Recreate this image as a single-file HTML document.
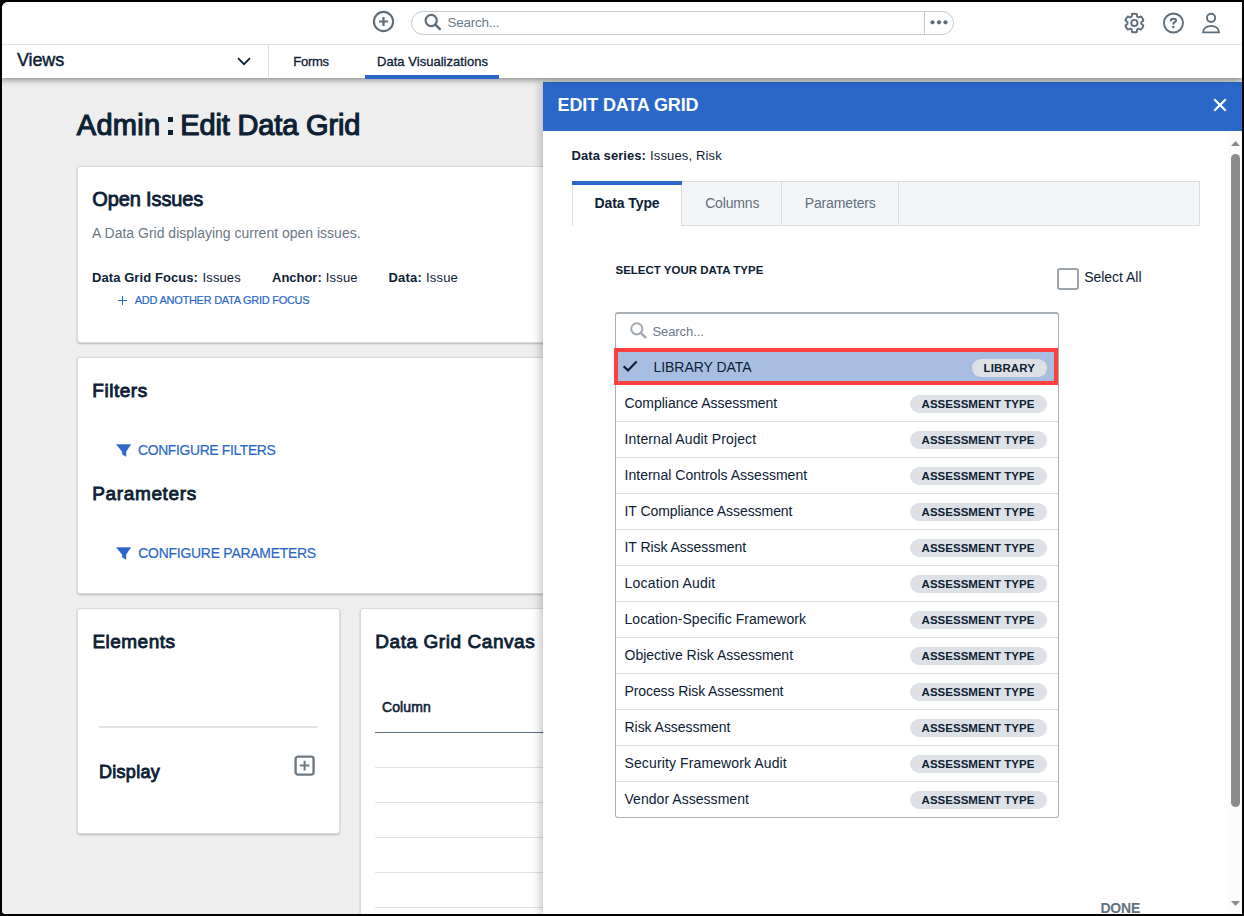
<!DOCTYPE html>
<html><head><meta charset="utf-8"><style>
html,body{margin:0;padding:0;}
body{width:1244px;height:916px;background:#000;overflow:hidden;position:relative;font-family:"Liberation Sans",sans-serif;}
#scr{position:absolute;left:2px;top:2px;width:1240px;height:912px;background:#eeeeee;border-radius:6px 0 0 3px;overflow:hidden;}
#in{position:absolute;left:-2px;top:-2px;width:1244px;height:916px;}
.t{position:absolute;line-height:1;white-space:nowrap;}
.r{position:absolute;}
</style></head><body><div id="scr"><div id="in">
<div class="r" style="left:0px;top:0px;width:1244px;height:44px;background:#fff;"></div>
<div class="r" style="left:0px;top:44px;width:1244px;height:1px;background:#dfe3e7;"></div>
<div class="r" style="left:0px;top:45px;width:1244px;height:33px;background:#fff;box-shadow:0 2px 6px rgba(0,0,0,.42);z-index:7;clip-path:inset(0 -20px -20px -20px);"></div>
<div class="r" style="left:268px;top:45px;width:1px;height:32px;background:#d9dde1;z-index:8;"></div>
<div class="r" style="left:365px;top:74.6px;width:134px;height:4px;background:#2a67c8;z-index:8;"></div>
<div class="r" style="left:77px;top:166px;width:1090px;height:177px;background:#fff;border:1px solid #d6dadf;border-radius:3px;box-shadow:0 1px 2px rgba(0,0,0,.22);box-sizing:border-box;"></div>
<div class="r" style="left:77px;top:357px;width:1090px;height:237px;background:#fff;border:1px solid #d6dadf;border-radius:3px;box-shadow:0 1px 2px rgba(0,0,0,.22);box-sizing:border-box;"></div>
<div class="r" style="left:77px;top:608px;width:263px;height:226px;background:#fff;border:1px solid #d6dadf;border-radius:3px;box-shadow:0 1px 2px rgba(0,0,0,.22);box-sizing:border-box;"></div>
<div class="r" style="left:360px;top:608px;width:807px;height:400px;background:#fff;border:1px solid #d6dadf;border-radius:3px;box-shadow:0 1px 2px rgba(0,0,0,.22);box-sizing:border-box;"></div>
<div class="r" style="left:99px;top:726px;width:219px;height:2px;background:#e2e2e2;"></div>
<svg class="r" style="left:294px;top:754.5px" width="22" height="22" viewBox="0 0 22 22"><rect x="1.6" y="1.6" width="18" height="18" rx="2.5" fill="none" stroke="#6c7a86" stroke-width="2.4"/><path d="M10.6 5.8v9.6M5.8 10.6h9.6" stroke="#6c7a86" stroke-width="2"/></svg>
<div class="r" style="left:375px;top:731.5px;width:170px;height:1.2px;background:#5f6e7b;"></div>
<div class="r" style="left:375px;top:767px;width:170px;height:1px;background:#dfe2e5;"></div>
<div class="r" style="left:375px;top:802px;width:170px;height:1px;background:#dfe2e5;"></div>
<div class="r" style="left:375px;top:837px;width:170px;height:1px;background:#dfe2e5;"></div>
<div class="r" style="left:375px;top:872px;width:170px;height:1px;background:#dfe2e5;"></div>
<div class="r" style="left:375px;top:907px;width:170px;height:1px;background:#dfe2e5;"></div>
<svg class="r" style="left:116px;top:444.4px" width="15" height="13" viewBox="0 0 15 13"><path d="M0.4 0.4H14.8L10 7.5V12.4L6.2 10.1V7.5Z" fill="#2a67c8" stroke="#2a67c8" stroke-width="0.4" stroke-linejoin="round"/></svg>
<svg class="r" style="left:116px;top:547.2px" width="15" height="13" viewBox="0 0 15 13"><path d="M0.4 0.4H14.8L10 7.5V12.4L6.2 10.1V7.5Z" fill="#2a67c8" stroke="#2a67c8" stroke-width="0.4" stroke-linejoin="round"/></svg>
<div class="t" style="left:17.00px;top:50.56px;font-size:18px;color:#0d2135;letter-spacing:-0.138px;z-index:8;-webkit-text-stroke:0.45px #0d2135;">Views</div>
<div class="t" style="left:293.30px;top:54.70px;font-size:13px;color:#0d2135;letter-spacing:-0.266px;z-index:8;-webkit-text-stroke:0.3px #0d2135;">Forms</div>
<div class="t" style="left:377.00px;top:54.70px;font-size:13px;color:#0d2135;letter-spacing:0.034px;z-index:8;-webkit-text-stroke:0.3px #0d2135;">Data Visualizations</div>
<div class="t" style="left:447.40px;top:15.57px;font-size:13.5px;color:#6b7a87;letter-spacing:-0.227px;">Search...</div>
<div class="t" style="left:76.80px;top:111.25px;font-size:29px;color:#0d2135;letter-spacing:0.282px;-webkit-text-stroke:1.15px #0d2135;">Admin</div>
<div class="r" style="left:168px;top:117px;width:5.2px;height:5px;background:#0d2135;"></div>
<div class="r" style="left:168px;top:130px;width:5.2px;height:5px;background:#0d2135;"></div>
<div class="t" style="left:180.30px;top:111.25px;font-size:29px;color:#0d2135;letter-spacing:-0.152px;-webkit-text-stroke:1.15px #0d2135;">Edit Data Grid</div>
<div class="t" style="left:92.20px;top:188.87px;font-size:20px;color:#0d2135;letter-spacing:-0.119px;-webkit-text-stroke:0.85px #0d2135;">Open Issues</div>
<div class="t" style="left:92.10px;top:226.35px;font-size:14px;color:#6b7785;">A Data Grid displaying current open issues.</div>
<div class="t" style="left:92.00px;top:270.60px;font-size:13px;color:#0d2135;font-weight:700;letter-spacing:0.079px;">Data Grid Focus:</div>
<div class="t" style="left:202.60px;top:270.60px;font-size:13px;color:#0d2135;letter-spacing:0.104px;">Issues</div>
<div class="t" style="left:272.10px;top:270.60px;font-size:13px;color:#0d2135;font-weight:700;letter-spacing:-0.033px;">Anchor:</div>
<div class="t" style="left:325.80px;top:270.60px;font-size:13px;color:#0d2135;letter-spacing:0.184px;">Issue</div>
<div class="t" style="left:388.40px;top:270.60px;font-size:13px;color:#0d2135;font-weight:700;letter-spacing:0.217px;">Data:</div>
<div class="t" style="left:426.00px;top:270.60px;font-size:13px;color:#0d2135;letter-spacing:0.184px;">Issue</div>
<div class="r" style="left:118.2px;top:299.8px;width:8.4px;height:1.7px;background:#2a67c8;"></div>
<div class="r" style="left:121.55px;top:296.45px;width:1.7px;height:8.4px;background:#2a67c8;"></div>
<div class="t" style="left:134.80px;top:295.49px;font-size:11px;color:#2a67c8;letter-spacing:-0.265px;-webkit-text-stroke:0.2px #2a67c8;">ADD ANOTHER DATA GRID FOCUS</div>
<div class="t" style="left:92.30px;top:380.52px;font-size:19px;color:#0d2135;letter-spacing:0.526px;-webkit-text-stroke:0.85px #0d2135;">Filters</div>
<div class="t" style="left:138.00px;top:444.23px;font-size:13.9px;color:#2a67c8;letter-spacing:-0.345px;-webkit-text-stroke:0.2px #2a67c8;">CONFIGURE FILTERS</div>
<div class="t" style="left:92.30px;top:483.92px;font-size:19px;color:#0d2135;letter-spacing:0.631px;-webkit-text-stroke:0.85px #0d2135;">Parameters</div>
<div class="t" style="left:138.30px;top:547.43px;font-size:13.9px;color:#2a67c8;letter-spacing:-0.214px;-webkit-text-stroke:0.2px #2a67c8;">CONFIGURE PARAMETERS</div>
<div class="t" style="left:92.40px;top:632.42px;font-size:19px;color:#0d2135;letter-spacing:0.477px;-webkit-text-stroke:0.85px #0d2135;">Elements</div>
<div class="t" style="left:99.00px;top:763.06px;font-size:18px;color:#0d2135;letter-spacing:0.281px;-webkit-text-stroke:0.85px #0d2135;">Display</div>
<div class="t" style="left:375.30px;top:632.42px;font-size:19px;color:#0d2135;letter-spacing:0.563px;-webkit-text-stroke:0.85px #0d2135;">Data Grid Canvas</div>
<div class="t" style="left:382.00px;top:700.15px;font-size:14px;color:#0d2135;letter-spacing:0.097px;-webkit-text-stroke:0.55px #0d2135;">Column</div>
<svg class="r" style="left:0;top:0" width="1244" height="44" viewBox="0 0 1244 44">
<g fill="none" stroke="#5e6e7b" stroke-width="2">
<circle cx="383.5" cy="21.5" r="9.6" stroke-width="2.1"/>
<path d="M383.5 17v9M379 21.5h9" stroke-width="2.2"/>
<circle cx="431.2" cy="20.5" r="5.6" stroke-width="2.2"/>
<path d="M435.3 24.6l4.6 4.6" stroke-width="2.4" stroke-linecap="round"/>
<circle cx="1173.45" cy="23" r="9.55" stroke-width="1.9"/>
<path d="M1170.9 20.4c0-1.1 1.1-1.7 2.6-1.7s2.6.7 2.6 1.7c0 1.2-1.4 1.6-2.6 2.9v.5" stroke-width="2" stroke-linecap="round"/>
<circle cx="1211.1" cy="17.85" r="4.15" stroke-width="1.9"/>
<path d="M1203 32.4C1203 28.4 1206.6 25.85 1211.05 25.85C1215.5 25.85 1219.1 28.4 1219.1 32.4Z" stroke-linejoin="round" stroke-width="1.9"/>
</g>
<circle cx="1173.4" cy="27.1" r="1.25" fill="#5e6e7b"/>
<rect x="411.5" y="11.5" width="542" height="23" rx="11.5" fill="none" stroke="#c4c9ce" stroke-width="1"/>
<path d="M924.5 12v22" stroke="#c4c9ce" stroke-width="1"/>
<circle cx="932.5" cy="22.3" r="2.1" fill="#5e6e7b"/><circle cx="939" cy="22.3" r="2.1" fill="#5e6e7b"/><circle cx="945.5" cy="22.3" r="2.1" fill="#5e6e7b"/>
</svg>
<svg class="r" style="left:0;top:0" width="1244" height="44"><path d="M1131.70 16.65L1131.99 14.02A9.3 9.3 0 0 1 1136.81 14.02L1137.10 16.65A6.9 6.9 0 0 1 1138.55 17.49L1140.98 16.42A9.3 9.3 0 0 1 1143.38 20.59L1141.25 22.16A6.9 6.9 0 0 1 1141.25 23.84L1143.38 25.41A9.3 9.3 0 0 1 1140.98 29.58L1138.55 28.51A6.9 6.9 0 0 1 1137.10 29.35L1136.81 31.98A9.3 9.3 0 0 1 1131.99 31.98L1131.70 29.35A6.9 6.9 0 0 1 1130.25 28.51L1127.82 29.58A9.3 9.3 0 0 1 1125.42 25.41L1127.55 23.84A6.9 6.9 0 0 1 1127.55 22.16L1125.42 20.59A9.3 9.3 0 0 1 1127.82 16.42L1130.25 17.49A6.9 6.9 0 0 1 1131.70 16.65Z" fill="none" stroke="#5e6e7b" stroke-width="1.9" stroke-linejoin="round"/><circle cx="1134.4" cy="23.0" r="3.1" fill="none" stroke="#5e6e7b" stroke-width="1.9"/></svg>
<svg class="r" style="left:236px;top:56px;z-index:8" width="16" height="10" viewBox="0 0 16 10"><path d="M2 2.2l6 6 6-6" fill="none" stroke="#0d2135" stroke-width="1.8"/></svg>
<div class="r" style="left:543px;top:82px;width:699px;height:832px;background:#fff;box-shadow:-3px 0 8px rgba(0,0,0,.22);z-index:5"></div>
<div class="r" style="left:0;top:0;width:1244px;height:916px;z-index:6">
<div class="r" style="left:543px;top:82px;width:699px;height:49px;background:#2968c8;"></div>
<div class="t" style="left:557.50px;top:95.76px;font-size:18px;color:#fff;font-weight:700;letter-spacing:-0.119px;">EDIT DATA GRID</div>
<svg class="r" style="left:1212px;top:97px" width="16" height="16" viewBox="0 0 16 16"><path d="M2.2 2.2l11.6 11.6M13.8 2.2L2.2 13.8" stroke="#fff" stroke-width="2.2"/></svg>
<div class="r" style="left:1228px;top:131px;width:14px;height:783px;background:#fbfbfb;"></div>
<svg class="r" style="left:1228px;top:131px" width="14" height="783" viewBox="0 0 14 783"><path d="M3 15h9l-4.5-5z" fill="#8a8a8a"/><path d="M3 770h9l-4.5 5z" fill="#8a8a8a"/><rect x="3" y="23" width="9" height="653" rx="4.5" fill="#8c8c8c"/></svg>
<div class="t" style="left:571.50px;top:148.80px;font-size:13px;color:#0d2135;font-weight:700;letter-spacing:0.064px;">Data series:</div>
<div class="t" style="left:650.00px;top:148.80px;font-size:13px;color:#0d2135;letter-spacing:0.143px;">Issues, Risk</div>
<div class="r" style="left:571.5px;top:180.5px;width:628px;height:45.5px;background:#f4f5f7;border:1px solid #d8dde2;box-sizing:border-box;"></div>
<div class="r" style="left:571.5px;top:180.5px;width:110px;height:45.5px;background:#fff;border-left:1px solid #d8dde2;border-right:1px solid #d8dde2;box-sizing:border-box;"></div>
<div class="r" style="left:571.5px;top:180.5px;width:110px;height:4.5px;background:#2a67c8;"></div>
<div class="r" style="left:781px;top:180.5px;width:1px;height:45px;background:#d8dde2;"></div>
<div class="r" style="left:898px;top:180.5px;width:1px;height:45px;background:#d8dde2;"></div>
<div class="t" style="left:594.50px;top:196.45px;font-size:14px;color:#0d2135;font-weight:700;letter-spacing:-0.094px;">Data Type</div>
<div class="t" style="left:705.20px;top:196.45px;font-size:14px;color:#5f6f7d;letter-spacing:-0.174px;">Columns</div>
<div class="t" style="left:804.70px;top:196.45px;font-size:14px;color:#5f6f7d;letter-spacing:-0.133px;">Parameters</div>
<div class="t" style="left:615.50px;top:265.27px;font-size:11.5px;color:#0d2135;font-weight:700;">SELECT YOUR DATA TYPE</div>
<div class="r" style="left:1057px;top:268px;width:22px;height:22px;border:2px solid #9ca5ad;border-radius:3px;box-sizing:border-box;background:#fff;"></div>
<div class="t" style="left:1084.20px;top:270.15px;font-size:14px;color:#0d2135;letter-spacing:-0.029px;">Select All</div>
<div class="r" style="left:615px;top:312px;width:444px;height:506px;border:1px solid #a7aeb5;border-top:2px solid #a7aeb5;border-radius:3px;box-sizing:border-box;background:#fff;"></div>
<svg class="r" style="left:628px;top:320px" width="22" height="22" viewBox="0 0 22 22"><circle cx="8.8" cy="8.8" r="5.6" fill="none" stroke="#a1a9b1" stroke-width="2"/><path d="M12.8 12.8l4.6 4.6" stroke="#a1a9b1" stroke-width="2.4" stroke-linecap="round"/></svg>
<div class="t" style="left:652.40px;top:324.90px;font-size:13px;color:#6b7a87;letter-spacing:-0.059px;">Search...</div>
<div class="r" style="left:614px;top:348px;width:444px;height:37px;background:#a8bee0;border:4px solid #fd4040;box-sizing:border-box;"></div>
<svg class="r" style="left:620px;top:356px" width="20" height="18" viewBox="0 0 20 18"><path d="M3.6 10.2l4.4 4.2 8.6-9" fill="none" stroke="#0d2135" stroke-width="2.2"/></svg>
<div class="t" style="left:653.50px;top:360.05px;font-size:14px;color:#0d2135;letter-spacing:-0.049px;">LIBRARY DATA</div>
<div class="r" style="left:972px;top:359px;width:75px;height:18px;background:#dde1e5;border-radius:9px;"></div>
<div class="t" style="left:983.60px;top:363.27px;font-size:11.5px;color:#0d2135;font-weight:700;letter-spacing:0.097px;">LIBRARY</div>
<div class="t" style="left:624.50px;top:396.15px;font-size:14px;color:#0d2135;letter-spacing:-0.031px;">Compliance Assessment</div>
<div class="r" style="left:910px;top:395px;width:137px;height:18px;background:#dde1e5;border-radius:9px;"></div>
<div class="t" style="left:921.60px;top:399.27px;font-size:11.5px;color:#0d2135;font-weight:700;letter-spacing:0.020px;">ASSESSMENT TYPE</div>
<div class="r" style="left:616px;top:421px;width:442px;height:1px;background:#dcdfe2;"></div>
<div class="t" style="left:624.50px;top:432.15px;font-size:14px;color:#0d2135;letter-spacing:0.116px;">Internal Audit Project</div>
<div class="r" style="left:910px;top:431px;width:137px;height:18px;background:#dde1e5;border-radius:9px;"></div>
<div class="t" style="left:921.60px;top:435.27px;font-size:11.5px;color:#0d2135;font-weight:700;letter-spacing:0.020px;">ASSESSMENT TYPE</div>
<div class="r" style="left:616px;top:457px;width:442px;height:1px;background:#dcdfe2;"></div>
<div class="t" style="left:624.50px;top:468.15px;font-size:14px;color:#0d2135;letter-spacing:0.020px;">Internal Controls Assessment</div>
<div class="r" style="left:910px;top:467px;width:137px;height:18px;background:#dde1e5;border-radius:9px;"></div>
<div class="t" style="left:921.60px;top:471.27px;font-size:11.5px;color:#0d2135;font-weight:700;letter-spacing:0.020px;">ASSESSMENT TYPE</div>
<div class="r" style="left:616px;top:493px;width:442px;height:1px;background:#dcdfe2;"></div>
<div class="t" style="left:624.50px;top:504.15px;font-size:14px;color:#0d2135;letter-spacing:-0.060px;">IT Compliance Assessment</div>
<div class="r" style="left:910px;top:503px;width:137px;height:18px;background:#dde1e5;border-radius:9px;"></div>
<div class="t" style="left:921.60px;top:507.27px;font-size:11.5px;color:#0d2135;font-weight:700;letter-spacing:0.020px;">ASSESSMENT TYPE</div>
<div class="r" style="left:616px;top:529px;width:442px;height:1px;background:#dcdfe2;"></div>
<div class="t" style="left:624.50px;top:540.15px;font-size:14px;color:#0d2135;letter-spacing:-0.064px;">IT Risk Assessment</div>
<div class="r" style="left:910px;top:539px;width:137px;height:18px;background:#dde1e5;border-radius:9px;"></div>
<div class="t" style="left:921.60px;top:543.27px;font-size:11.5px;color:#0d2135;font-weight:700;letter-spacing:0.020px;">ASSESSMENT TYPE</div>
<div class="r" style="left:616px;top:565px;width:442px;height:1px;background:#dcdfe2;"></div>
<div class="t" style="left:624.50px;top:576.15px;font-size:14px;color:#0d2135;letter-spacing:0.212px;">Location Audit</div>
<div class="r" style="left:910px;top:575px;width:137px;height:18px;background:#dde1e5;border-radius:9px;"></div>
<div class="t" style="left:921.60px;top:579.27px;font-size:11.5px;color:#0d2135;font-weight:700;letter-spacing:0.020px;">ASSESSMENT TYPE</div>
<div class="r" style="left:616px;top:601px;width:442px;height:1px;background:#dcdfe2;"></div>
<div class="t" style="left:624.50px;top:612.15px;font-size:14px;color:#0d2135;letter-spacing:0.039px;">Location-Specific Framework</div>
<div class="r" style="left:910px;top:611px;width:137px;height:18px;background:#dde1e5;border-radius:9px;"></div>
<div class="t" style="left:921.60px;top:615.27px;font-size:11.5px;color:#0d2135;font-weight:700;letter-spacing:0.020px;">ASSESSMENT TYPE</div>
<div class="r" style="left:616px;top:637px;width:442px;height:1px;background:#dcdfe2;"></div>
<div class="t" style="left:624.50px;top:648.15px;font-size:14px;color:#0d2135;letter-spacing:-0.013px;">Objective Risk Assessment</div>
<div class="r" style="left:910px;top:647px;width:137px;height:18px;background:#dde1e5;border-radius:9px;"></div>
<div class="t" style="left:921.60px;top:651.27px;font-size:11.5px;color:#0d2135;font-weight:700;letter-spacing:0.020px;">ASSESSMENT TYPE</div>
<div class="r" style="left:616px;top:673px;width:442px;height:1px;background:#dcdfe2;"></div>
<div class="t" style="left:624.50px;top:684.15px;font-size:14px;color:#0d2135;letter-spacing:-0.093px;">Process Risk Assessment</div>
<div class="r" style="left:910px;top:683px;width:137px;height:18px;background:#dde1e5;border-radius:9px;"></div>
<div class="t" style="left:921.60px;top:687.27px;font-size:11.5px;color:#0d2135;font-weight:700;letter-spacing:0.020px;">ASSESSMENT TYPE</div>
<div class="r" style="left:616px;top:709px;width:442px;height:1px;background:#dcdfe2;"></div>
<div class="t" style="left:624.50px;top:720.15px;font-size:14px;color:#0d2135;letter-spacing:-0.045px;">Risk Assessment</div>
<div class="r" style="left:910px;top:719px;width:137px;height:18px;background:#dde1e5;border-radius:9px;"></div>
<div class="t" style="left:921.60px;top:723.27px;font-size:11.5px;color:#0d2135;font-weight:700;letter-spacing:0.020px;">ASSESSMENT TYPE</div>
<div class="r" style="left:616px;top:745px;width:442px;height:1px;background:#dcdfe2;"></div>
<div class="t" style="left:624.50px;top:756.15px;font-size:14px;color:#0d2135;letter-spacing:0.119px;">Security Framework Audit</div>
<div class="r" style="left:910px;top:755px;width:137px;height:18px;background:#dde1e5;border-radius:9px;"></div>
<div class="t" style="left:921.60px;top:759.27px;font-size:11.5px;color:#0d2135;font-weight:700;letter-spacing:0.020px;">ASSESSMENT TYPE</div>
<div class="r" style="left:616px;top:781px;width:442px;height:1px;background:#dcdfe2;"></div>
<div class="t" style="left:624.50px;top:792.15px;font-size:14px;color:#0d2135;letter-spacing:0.040px;">Vendor Assessment</div>
<div class="r" style="left:910px;top:791px;width:137px;height:18px;background:#dde1e5;border-radius:9px;"></div>
<div class="t" style="left:921.60px;top:795.27px;font-size:11.5px;color:#0d2135;font-weight:700;letter-spacing:0.020px;">ASSESSMENT TYPE</div>
<div class="t" style="left:1100.50px;top:900.95px;font-size:14px;color:#5f7180;font-weight:700;letter-spacing:-0.238px;">DONE</div>
</div>
</div></div></body></html>
